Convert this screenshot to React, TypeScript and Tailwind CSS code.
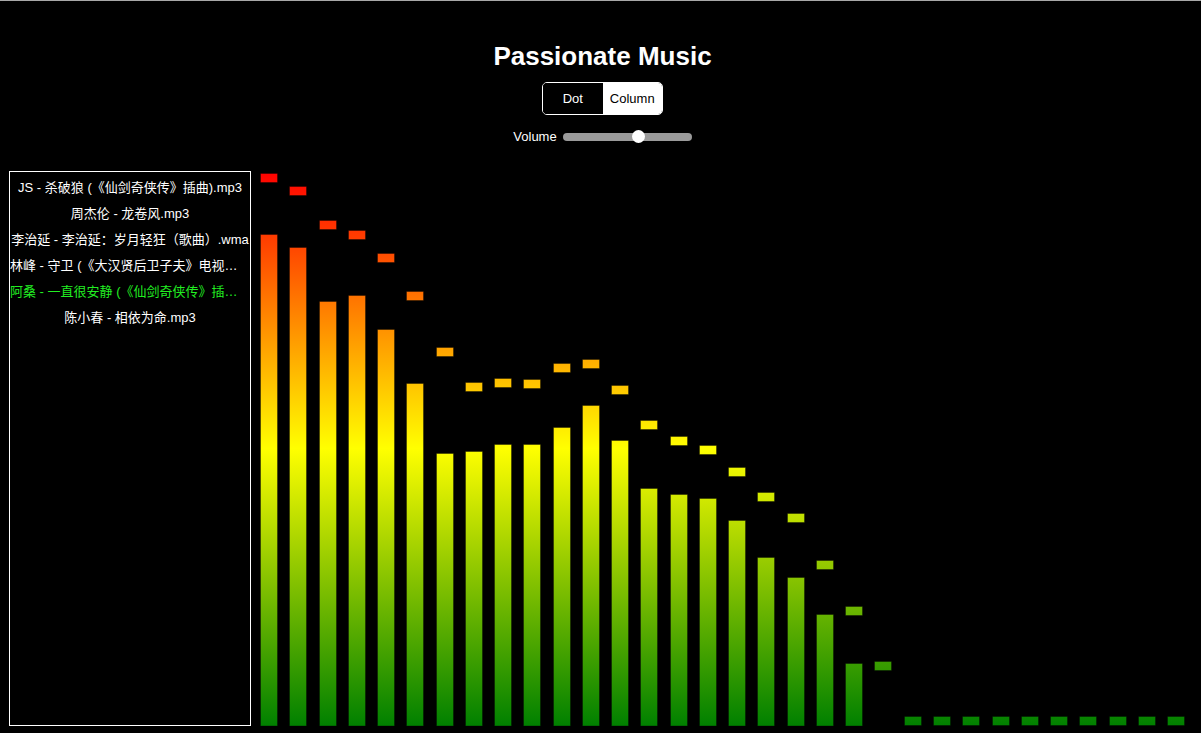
import { useState } from 'react';

const songs = [
  'JS - 杀破狼 (《仙剑奇侠传》插曲).mp3',
  '周杰伦 - 龙卷风.mp3',
  '李治延 - 李治延：岁月轻狂（歌曲）.wma',
  '林峰 - 守卫 (《大汉贤后卫子夫》电视剧主题曲).mp3',
  '阿桑 - 一直很安静 (《仙剑奇侠传》插曲).mp3',
  '陈小春 - 相依为命.mp3',
];

// bar tops and cap tops, measured in canvas px (canvas is 950 x 555)
const bars = [63, 76, 130, 124, 158, 212, 282, 280, 273, 273, 256, 234, 269, 317, 323, 327, 349, 386, 406, 443, 492];
const caps = [2, 15, 49, 59, 82, 120, 176, 211, 207, 208, 192, 188, 214, 249, 265, 274, 296, 321, 342, 389, 435, 490];

const H = 555;
const COUNT = 32;

const Visualizer = () => {
  return (
    <svg width={950} height={H} viewBox={`0 0 950 ${H}`} className="block shrink-0">
      <defs>
        <linearGradient id="spec" gradientUnits="userSpaceOnUse" x1="0" y1="0" x2="0" y2={H}>
          <stop offset="0" stopColor="#ff0000" />
          <stop offset="0.5" stopColor="#ffff00" />
          <stop offset="1" stopColor="#008000" />
        </linearGradient>
      </defs>
      {Array.from({ length: COUNT }).map((_, i) => {
        const x = Math.round(9 + i * 29.26);
        const top = bars[i] ?? H;
        const cap = caps[i] ?? H - 10;
        return (
          <g key={i}>
            {top < H && (
              <rect x={x + 0.5} y={top + 0.5} width={17} height={H - top - 0.5} fill="url(#spec)" stroke="rgba(0,0,0,0.35)" />
            )}
            <rect x={x + 0.5} y={cap + 0.5} width={17} height={9} fill="url(#spec)" stroke="rgba(0,0,0,0.35)" />
          </g>
        );
      })}
    </svg>
  );
};

export default function App() {
  const [mode, setMode] = useState<'dot' | 'column'>('dot');
  const [current] = useState(4);

  return (
    <div
      className="h-[733px] w-[1201px] overflow-hidden border-t border-[#a8a8a8] bg-black text-white"
      style={{ fontFamily: '"Liberation Sans", Arial, "Noto Sans CJK SC", sans-serif' }}
    >
      <header className="flex flex-col items-center pl-[4px] pt-[40px]">
        <h1 className="text-[26px] font-bold leading-[30px]">Passionate Music</h1>
        <div className="mt-[11px] flex h-[33px] w-[121px] overflow-hidden rounded-[5px] border border-white text-[13px]">
          <button
            onClick={() => setMode('dot')}
            className={`flex-1 ${mode === 'dot' ? 'bg-black text-white' : 'bg-white text-black'}`}
          >
            Dot
          </button>
          <button
            onClick={() => setMode('column')}
            className={`flex-1 ${mode === 'column' ? 'bg-black text-white' : 'bg-white text-black'}`}
          >
            Column
          </button>
        </div>
        <div className="mt-[14px] flex h-[16px] items-center gap-[6px] text-[13px]">
          <span>Volume</span>
          <div className="relative h-[8px] w-[129px] rounded-full bg-[#9a9a9a]">
            <div className="absolute left-[69px] top-[-3px] h-[13px] w-[13px] rounded-full bg-white" />
          </div>
        </div>
      </header>

      <main className="mt-[26px] flex">
        <ul className="ml-[9px] h-[555px] w-[242px] shrink-0 border border-white pt-[3px] text-[13px] leading-[26px] [text-spacing-trim:space-all]">
          {songs.map((s, i) => (
            <li
              key={s}
              className={`overflow-hidden text-ellipsis whitespace-nowrap text-center ${i === current ? 'text-[#22ee22]' : 'text-white'}`}
              style={{ fontFamily: 'Arial, "Liberation Sans", "Noto Sans CJK SC", sans-serif' }}
            >
              {s}
            </li>
          ))}
        </ul>
        <Visualizer />
      </main>
    </div>
  );
}
